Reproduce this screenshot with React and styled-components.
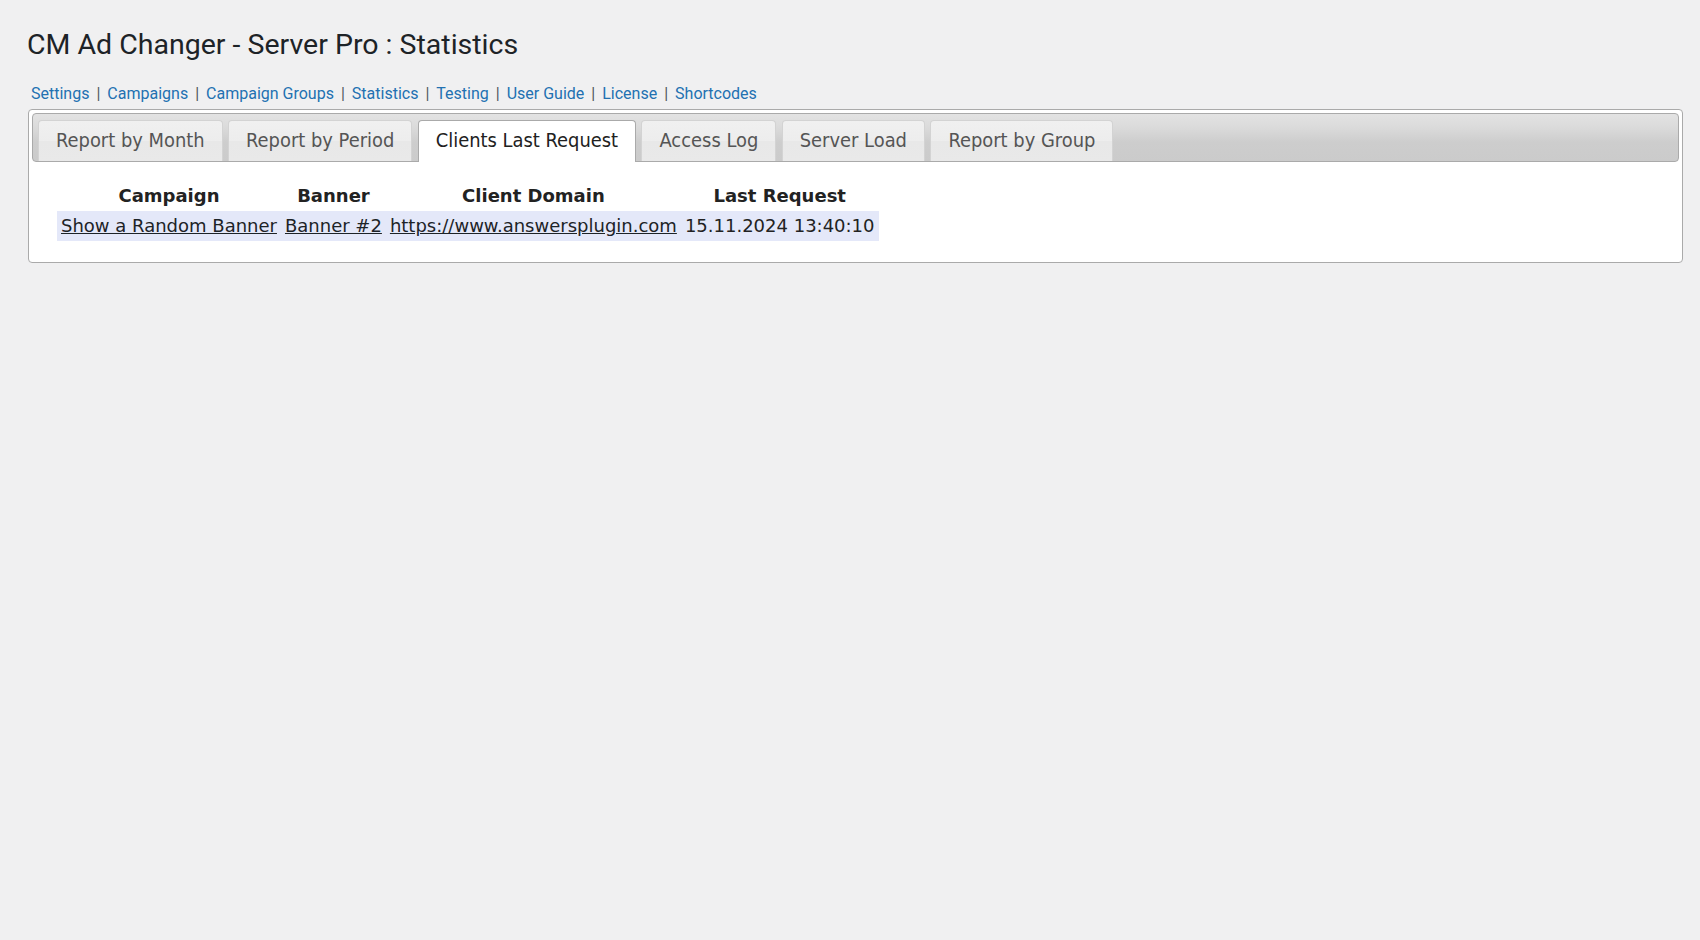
import React from 'react';
import styled, { createGlobalStyle } from 'styled-components';

const GlobalStyle = createGlobalStyle`
  html, body {
    margin: 0;
    padding: 0;
    background: #f0f0f1;
  }

  body {
    font-family: Roboto, "Liberation Sans", sans-serif;
    color: #1d2327;
  }
`;

const menuLinks = [
  'Settings',
  'Campaigns',
  'Campaign Groups',
  'Statistics',
  'Testing',
  'User Guide',
  'License',
  'Shortcodes',
];

const tabs = [
  'Report by Month',
  'Report by Period',
  'Clients Last Request',
  'Access Log',
  'Server Load',
  'Report by Group',
];

const rows = [
  {
    campaign: 'Show a Random Banner',
    banner: 'Banner #2',
    domain: 'https://www.answersplugin.com',
    lastRequest: '15.11.2024 13:40:10',
  },
];

const App = () => {
  return (
    <>
      <GlobalStyle />
      <Wrap>
        <Title>CM Ad Changer - Server Pro : Statistics</Title>

        <SubMenu>
          {menuLinks.map((label, i) => (
            <li key={label}>
              <MenuLink href="#">{label}</MenuLink>
              {i < menuLinks.length - 1 && <Separator>|</Separator>}
            </li>
          ))}
        </SubMenu>

        <TabsBox>
          <TabNav>
            {tabs.map((label) => (
              <Tab key={label} active={label === 'Clients Last Request'}>
                <TabAnchor href="#" active={label === 'Clients Last Request'}>
                  {label}
                </TabAnchor>
              </Tab>
            ))}
          </TabNav>

          <Panel>
            <StatsTable>
              <thead>
                <tr>
                  <th>Campaign</th>
                  <th>Banner</th>
                  <th>Client Domain</th>
                  <th>Last Request</th>
                </tr>
              </thead>
              <tbody>
                {rows.map((row) => (
                  <DataRow key={row.domain + row.lastRequest}>
                    <td><CellLink href="#">{row.campaign}</CellLink></td>
                    <td><CellLink href="#">{row.banner}</CellLink></td>
                    <td><CellLink href="#">{row.domain}</CellLink></td>
                    <td>{row.lastRequest}</td>
                  </DataRow>
                ))}
              </tbody>
            </StatsTable>
          </Panel>
        </TabsBox>
      </Wrap>
    </>
  );
};

// Styled Components
const Wrap = styled.div`
  padding: 26px 17px 0 28px;
`;

const Title = styled.h1`
  margin: 0 0 0 -1px;
  font-size: 28.5px;
  line-height: 37px;
  font-weight: 400;
  color: #1d2327;
`;

const SubMenu = styled.ul`
  list-style: none;
  display: flex;
  margin: 20px 0 0 3px;
  padding: 0;
  font-size: 16px;
  line-height: 22px;

  li {
    display: flex;
    align-items: center;
  }
`;

const MenuLink = styled.a`
  color: #2271b1;
  text-decoration: none;
`;

const Separator = styled.span`
  color: #50575e;
  margin: 0 7px;
`;

const TabsBox = styled.div`
  margin-top: 4px;
  background: #ffffff;
  border: 1px solid #aaaaaa;
  border-radius: 4px;
  padding: 3px;
`;

const TabNav = styled.ul`
  list-style: none;
  margin: 0;
  display: flex;
  align-items: flex-end;
  gap: 5.4px;
  padding: 6px 5px 0;
  border: 1px solid #aaaaaa;
  border-radius: 4px;
  background: linear-gradient(
    to bottom,
    #e3e3e3 0%,
    #dadada 30%,
    #cdcdcd 60%,
    #cbcbcb 100%
  );
`;

const Tab = styled.li`
  border: 1px solid ${(p) => (p.active ? '#aaaaaa' : '#d3d3d3')};
  border-bottom: none;
  border-radius: 4px 4px 0 0;
  margin-bottom: ${(p) => (p.active ? '-1px' : '0')};
  padding-bottom: ${(p) => (p.active ? '1px' : '0')};
  background: ${(p) =>
    p.active
      ? '#ffffff'
      : 'linear-gradient(to bottom, #f0f0f0 0%, #ededed 50%, #e8e8e8 51%, #e9e9e9 100%)'};
`;

const TabAnchor = styled.a`
  display: block;
  padding: 9px 17px;
  font-family: "DejaVu Sans Condensed", "DejaVu Sans", sans-serif;
  font-size: 19.9px;
  line-height: 22px;
  color: ${(p) => (p.active ? '#212121' : '#555555')};
  text-decoration: none;
  white-space: nowrap;
`;

const Panel = styled.div`
  padding: 19px 25px 18px;
`;

const StatsTable = styled.table`
  border-collapse: collapse;
  font-family: "DejaVu Sans", Verdana, sans-serif;
  font-size: 18px;
  line-height: 22px;
  color: #222222;

  th,
  td {
    padding: 4px 4px;
    white-space: nowrap;
  }

  th {
    font-weight: 700;
    text-align: center;
  }
`;

const DataRow = styled.tr`
  background: #e4e8f9;
`;

const CellLink = styled.a`
  color: #1d2327;
  text-decoration: underline;
`;

export default App;
